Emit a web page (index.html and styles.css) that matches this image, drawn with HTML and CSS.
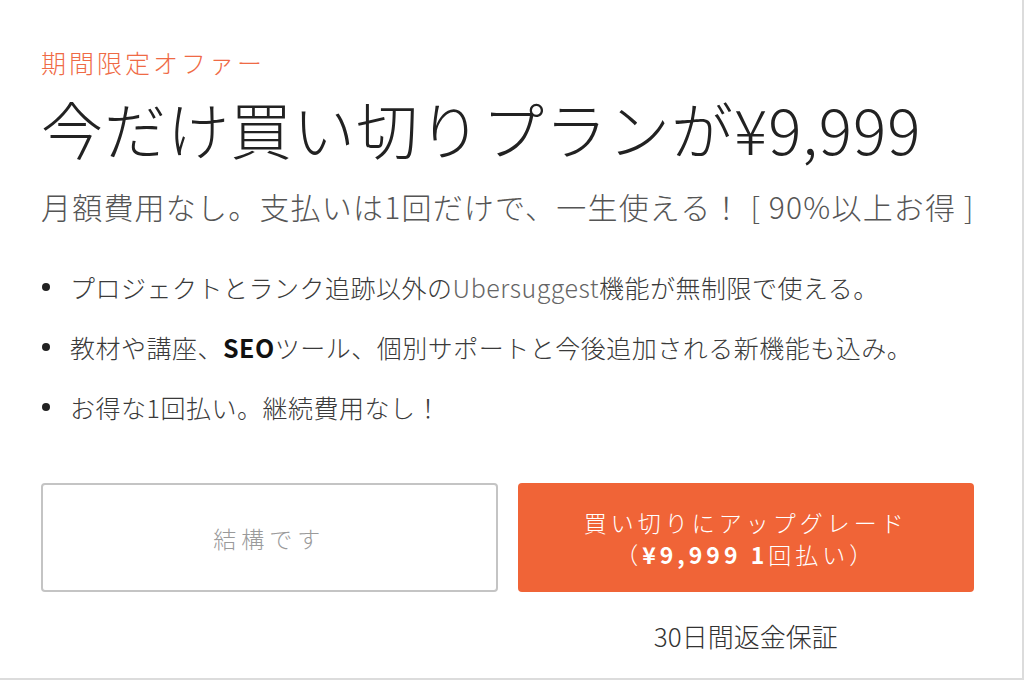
FILE: index.html
```html
<!DOCTYPE html>
<html lang="ja">
<head>
<meta charset="utf-8">
<title>買い切りプラン</title>
<link rel="stylesheet" href="styles.css">
</head>
<body>
<div class="panel">
  <div class="label">期間限定オファー</div>
  <h1 class="title">今だけ買い切りプランが¥9,999</h1>
  <p class="sub">月額費用なし。支払いは1回だけで、一生使える！ [ 90%以上お得 ]</p>
  <ul class="features">
    <li>プロジェクトとランク追跡以外の<span class="latin">Ubersuggest</span>機能が無制限で使える。</li>
    <li>教材や講座、<b>SEO</b>ツール、個別サポートと今後追加される新機能も込み。</li>
    <li>お得な1回払い。継続費用なし！</li>
  </ul>
  <div class="actions">
    <button class="btn btn-decline">結構です</button>
    <button class="btn btn-buy">買い切りにアップグレード<br><span class="price">（<b>¥9,999 1</b>回払い）</span></button>
    <div class="guarantee">30日間返金保証</div>
  </div>
</div>
</body>
</html>
```
FILE: styles.css
```css
html, body {
  margin: 0;
  padding: 0;
}
body {
  background: #dcdcdc;
  font-family: "Noto Sans CJK JP", "Noto Sans", sans-serif;
  width: 1024px;
  height: 680px;
  overflow: hidden;
}
.panel {
  width: 1022px;
  height: 678px;
  background: #ffffff;
  box-sizing: border-box;
  padding: 47px 48px 0 41px;
}
.label {
  font-size: 25px;
  line-height: 30px;
  letter-spacing: 3px;
  color: #ef6a45;
  font-weight: 300;
}
.title {
  margin: 16px 0 0;
  font-size: 62px;
  line-height: 70px;
  font-weight: 300;
  letter-spacing: 1px;
  color: #222;
  white-space: nowrap;
}
.sub {
  margin: 25px 0 0;
  font-size: 30px;
  line-height: 36px;
  font-weight: 300;
  letter-spacing: 1.2px;
  color: #555;
  white-space: nowrap;
}
.features {
  list-style: none;
  margin: 48px 0 0;
  padding: 0;
}
.features li {
  position: relative;
  padding-left: 29px;
  font-size: 25px;
  line-height: 30px;
  letter-spacing: 0.5px;
  color: #3a3a3a;
  font-weight: 300;
  margin-bottom: 30px;
  white-space: nowrap;
}
.features li:last-child {
  margin-bottom: 0;
}
.features li::before {
  content: "";
  position: absolute;
  left: 1px;
  top: 11px;
  width: 8px;
  height: 8px;
  border-radius: 50%;
  background: #222;
}
.features .latin {
  color: #666;
}
.features b {
  font-weight: 700;
  color: #111;
}
.actions {
  margin-top: 61px;
  display: grid;
  grid-template-columns: 1fr 1fr;
  column-gap: 20px;
}
.btn {
  height: 109px;
  border-radius: 4px;
  font-family: inherit;
  cursor: pointer;
}
.btn-decline {
  background: #fff;
  border: 2px solid #c4c4c4;
  color: #9a9a9a;
  font-size: 23px;
  letter-spacing: 5px;
  font-weight: 300;
}
.btn-buy {
  background: #f06437;
  border: none;
  color: #fff;
  font-size: 23px;
  line-height: 32px;
  letter-spacing: 4px;
  font-weight: 300;
}
.btn-buy b {
  font-weight: 700;
}
.guarantee {
  grid-column: 2;
  text-align: center;
  margin-top: 29px;
  font-size: 26px;
  line-height: 30px;
  color: #333;
  font-weight: 300;
}
```
